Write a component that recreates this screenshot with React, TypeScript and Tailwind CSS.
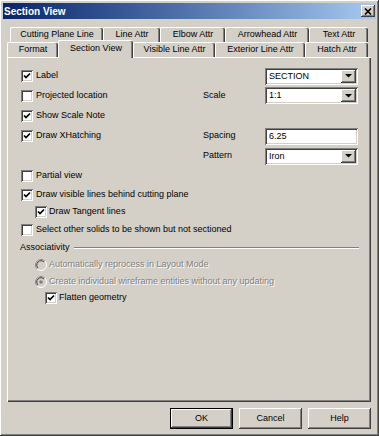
import React from "react";

const raised =
  "shadow-[inset_-1px_-1px_#404040,inset_1px_1px_#fff,inset_-2px_-2px_#808080,inset_2px_2px_#d4d0c8]";
const sunken =
  "shadow-[inset_1px_1px_#808080,inset_-1px_-1px_#fff,inset_2px_2px_#404040,inset_-2px_-2px_#d4d0c8]";
const disabledText = "text-[#808080] [text-shadow:1px_1px_0_#fff]";

function Check({ checked }: { checked?: boolean }) {
  return (
    <span className={`relative block w-[12px] h-[12px] shrink-0 bg-white ${sunken}`}>
      {checked ? (
        <svg className="absolute inset-0" width="12" height="12" viewBox="0 0 12 12">
          <polyline points="3,5.5 5,7.5 9,3.5" fill="none" stroke="#000" strokeWidth="1.7" />
        </svg>
      ) : null}
    </span>
  );
}

function Radio({ selected }: { selected?: boolean }) {
  return (
    <svg width="12" height="12" viewBox="0 0 12 12" className="shrink-0">
      <circle cx="6" cy="6" r="5.5" fill="#d4d0c8" stroke="#fff" />
      <path d="M2.1 9.9 A5.5 5.5 0 0 1 9.9 2.1" fill="none" stroke="#808080" />
      <path d="M3 9 A4.2 4.2 0 0 1 9 3" fill="none" stroke="#404040" />
      {selected ? <circle cx="6" cy="6" r="1.8" fill="#808080" /> : null}
    </svg>
  );
}

function Select({ value }: { value: string }) {
  return (
    <div className={`flex w-[93px] h-[17px] bg-white p-[2px] ${sunken}`}>
      <span className="flex-1 pl-[2px] leading-[13px]">{value}</span>
      <span className={`flex w-[15px] h-full items-center justify-center bg-[#d4d0c8] ${raised}`}>
        <svg width="7" height="4" viewBox="0 0 7 4">
          <polygon points="0,0 7,0 3.5,3.5" fill="#000" />
        </svg>
      </span>
    </div>
  );
}

function Tab({ label, w, selected }: { label: string; w: string; selected?: boolean }) {
  return (
    <div
      className={`flex items-center justify-center rounded-t-[2px] border-t border-l border-white bg-[#d4d0c8] shadow-[inset_-1px_0_#404040,inset_-2px_0_#808080] ${w} ${
        selected ? "relative z-10 h-[18px] -mb-[1px] pb-[2px]" : "h-[15px]"
      }`}
    >
      {label}
    </div>
  );
}

function Button({ label, primary }: { label: string; primary?: boolean }) {
  return (
    <div
      className={`flex w-[63px] h-[21px] items-center justify-center bg-[#d4d0c8] ${
        primary
          ? "shadow-[inset_0_0_0_1px_#000,inset_-2px_-2px_#404040,inset_2px_2px_#fff,inset_-3px_-3px_#808080]"
          : raised
      }`}
    >
      {label}
    </div>
  );
}

export default function App() {
  return (
    <div
      className={`flex flex-col w-[379px] h-[436px] p-[3px] bg-[#d4d0c8] text-black text-[9px] font-['Liberation_Sans',Arial,sans-serif] ${raised}`}
    >
      <div className="flex h-[16px] items-center justify-between bg-linear-to-r from-[#0a246a] to-[#a6caf0] pl-[1px]">
        <span className="text-[10px] font-bold text-white">Section View</span>
        <span className={`mr-[1px] flex w-[14px] h-[12px] items-center justify-center bg-[#d4d0c8] ${raised}`}>
          <svg width="8" height="7" viewBox="0 0 8 7">
            <path d="M1 0.5 L7 6.5 M7 0.5 L1 6.5" stroke="#000" strokeWidth="1.6" />
          </svg>
        </span>
      </div>

      <div className="mt-[8px] ml-[4px] flex flex-col">
        <div className="flex pl-[3px]">
          <Tab label="Cutting Plane Line" w="w-[93px]" />
          <Tab label="Line Attr" w="w-[57px]" />
          <Tab label="Elbow Attr" w="w-[65px]" />
          <Tab label="Arrowhead Attr" w="w-[84px]" />
          <Tab label="Text Attr" w="w-[59px]" />
        </div>
        <div className="flex h-[15px] items-end">
          <Tab label="Format" w="w-[51px]" />
          <Tab label="Section View" w="w-[75px]" selected />
          <Tab label="Visible Line Attr" w="w-[82px]" />
          <Tab label="Exterior Line Attr" w="w-[90px]" />
          <Tab label="Hatch Attr" w="w-[63px]" />
        </div>

        <div className="flex flex-col w-[364px] h-[345px] pl-[14px] pt-[9px] shadow-[inset_1px_1px_#fff,inset_-1px_-1px_#404040,inset_-2px_-2px_#808080]">
          <div className="flex h-[20px] items-center">
            <div className="flex w-[182px] items-center gap-[3px]">
              <Check checked />
              <span>Label</span>
            </div>
            <span className="w-[62px]" />
            <Select value="SECTION" />
          </div>
          <div className="flex h-[19px] items-center">
            <div className="flex w-[182px] items-center gap-[3px]">
              <Check />
              <span>Projected location</span>
            </div>
            <span className="w-[62px]">Scale</span>
            <Select value="1:1" />
          </div>
          <div className="flex h-[21px] items-center gap-[3px]">
            <Check checked />
            <span>Show Scale Note</span>
          </div>
          <div className="flex h-[20px] items-center">
            <div className="flex w-[182px] items-center gap-[3px]">
              <Check checked />
              <span>Draw XHatching</span>
            </div>
            <span className="w-[62px]">Spacing</span>
            <div className={`w-[93px] h-[17px] bg-white pl-[4px] leading-[17px] ${sunken}`}>6.25</div>
          </div>
          <div className="flex h-[20px] items-center">
            <span className="w-[182px]" />
            <span className="w-[62px]">Pattern</span>
            <Select value="Iron" />
          </div>
          <div className="flex h-[20px] items-center gap-[3px]">
            <Check />
            <span>Partial view</span>
          </div>
          <div className="flex h-[17px] items-center gap-[3px]">
            <Check checked />
            <span>Draw visible lines behind cutting plane</span>
          </div>
          <div className="flex h-[18px] items-center gap-[2px] pl-[14px]">
            <Check checked />
            <span>Draw Tangent lines</span>
          </div>
          <div className="flex h-[18px] items-center gap-[3px]">
            <Check />
            <span>Select other solids to be shown but not sectioned</span>
          </div>
          <div className="flex h-[18px] items-center gap-[4px] -ml-[1px] pr-[12px]">
            <span>Associativity</span>
            <span className="flex-1 h-[2px] border-t border-[#808080] border-b border-b-white" />
          </div>
          <div className={`flex h-[16px] items-center gap-[2px] pl-[14px] ${disabledText}`}>
            <Radio />
            <span>Automatically reprocess in Layout Mode</span>
          </div>
          <div className={`flex h-[18px] items-center gap-[2px] pl-[14px] ${disabledText}`}>
            <Radio selected />
            <span>Create individual wireframe entities without any updating</span>
          </div>
          <div className="flex h-[14px] items-center gap-[2px] pl-[24px]">
            <Check checked />
            <span>Flatten geometry</span>
          </div>
        </div>
      </div>

      <div className="mt-[6px] flex justify-end gap-[6px] pr-[5px]">
        <Button label="OK" primary />
        <Button label="Cancel" />
        <Button label="Help" />
      </div>
    </div>
  );
}
